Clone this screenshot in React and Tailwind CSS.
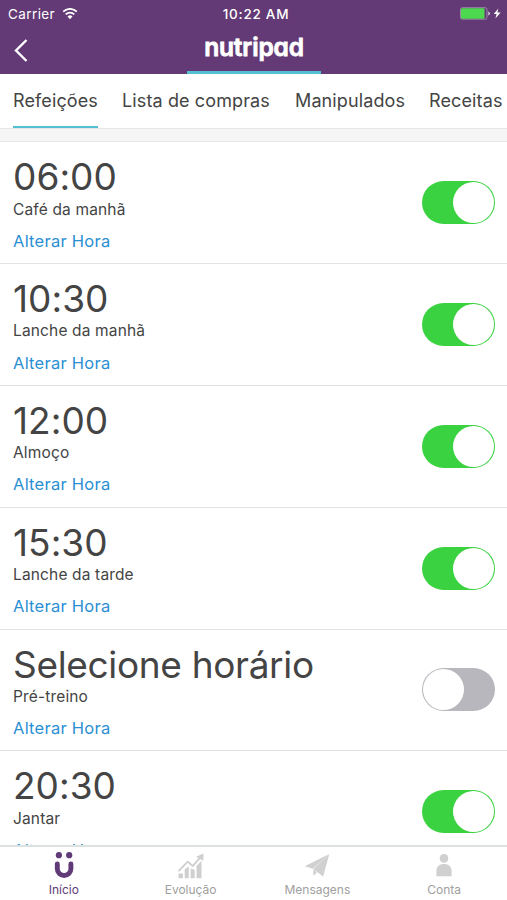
import clsx from "clsx";

const tabs = [
  { label: "Refeições", width: "w-[85px]", active: true },
  { label: "Lista de compras", width: "w-[149px]" },
  { label: "Manipulados", width: "w-[110px]" },
  { label: "Receitas", width: "w-[75px]" },
];

const meals = [
  { time: "06:00", name: "Café da manhã", enabled: true },
  { time: "10:30", name: "Lanche da manhã", enabled: true },
  { time: "12:00", name: "Almoço", enabled: true },
  { time: "15:30", name: "Lanche da tarde", enabled: true },
  { time: null, name: "Pré-treino", enabled: false },
  { time: "20:30", name: "Jantar", enabled: true },
];

const WifiIcon = () => (
  <svg className="ml-[7px] h-[13px] w-[16px]" viewBox="0 0 16 13" fill="none">
    <path d="M1.2 3.7a9.6 9.6 0 0 1 13.6 0" stroke="white" strokeWidth="1.8" />
    <path d="M3.7 6.4a6.1 6.1 0 0 1 8.6 0" stroke="white" strokeWidth="1.7" />
    <path d="M8 11.2 5.5 8.6a3.5 3.5 0 0 1 5 0z" fill="white" />
  </svg>
);

const BatteryIcon = () => (
  <svg className="h-[14px] w-[43px]" viewBox="0 0 43 14">
    <rect x="0.5" y="0.7" width="26.5" height="11.5" rx="1.8" fill="none" stroke="#9d86a8" />
    <rect x="1" y="1.2" width="23.5" height="10.5" rx="1.2" fill="#4cd94f" />
    <path d="M28.3 4.4a2.2 2.2 0 0 1 0 4.2z" fill="#e5dce9" />
    <path d="M38.3 1.5 33.8 7.1h2.8l-1.2 4.3 5.2-5.8h-3.2z" fill="white" />
  </svg>
);

const HomeIcon = () => (
  <svg className="h-[30px] w-[30px]" viewBox="0 0 30 30">
    <circle cx="9.9" cy="4.2" r="3.1" fill="#613a78" />
    <circle cx="20.2" cy="4.2" r="3.1" fill="#613a78" />
    <path
      d="M8.3 13v4.7a6.8 6.8 0 0 0 13.6 0V13"
      fill="none"
      stroke="#613a78"
      strokeWidth="4.9"
      strokeLinecap="round"
    />
  </svg>
);

const ChartIcon = () => (
  <svg className="h-[30px] w-[30px]" viewBox="0 0 30 30" fill="#cfcfcf">
    <path d="M2.5 22.5h4.4v4.8H2.5zM8.7 18.3l4.1-2.7v11.7H8.7zM14.6 17.5l4.1 1.2v8.6h-4.1zM20.5 15l5-5.3v17.6h-5z" />
    <path d="m2.5 20.2 9.2-9.5 5.2 4.2 7.8-9" fill="none" stroke="#cfcfcf" strokeWidth="1.8" />
    <path d="M27.6 2.4 27.2 9.7l-7.2-4z" />
  </svg>
);

const PlaneIcon = () => (
  <svg className="h-[30px] w-[30px]" viewBox="0 0 30 30" fill="#d0d0d0">
    <path d="M27.3 3 2.7 15.2l8.2 2.6z" />
    <path d="M27.3 3 11.3 18l9.8 7.5z" />
    <path d="M11.3 18v6.7l3.5-3.2z" />
  </svg>
);

const PersonIcon = () => (
  <svg className="h-[30px] w-[30px]" viewBox="0 0 30 30" fill="#d0d0d0">
    <circle cx="15" cy="7.4" r="4.3" />
    <path d="M7.4 25.3v-5c0-4.7 3.2-7.2 7.6-7.2s7.6 2.5 7.6 7.2v5z" />
  </svg>
);

const navItems = [
  { label: "Início", icon: HomeIcon, active: true },
  { label: "Evolução", icon: ChartIcon },
  { label: "Mensagens", icon: PlaneIcon },
  { label: "Conta", icon: PersonIcon },
];

const Header = () => (
  <header className="h-[74px] shrink-0 bg-[#633a75] text-white">
    <div className="grid h-[28px] grid-cols-3 items-center px-[8px] text-[13.5px] leading-[28px]">
      <div className="flex items-center tracking-[0.4px]">
        Carrier
        <WifiIcon />
      </div>
      <div className="pl-[5px] text-center font-medium tracking-[0.75px]">10:22 AM</div>
      <div className="-mr-[4px] flex justify-end">
        <BatteryIcon />
      </div>
    </div>
    <div className="grid h-[46px] grid-cols-[187px_134px_1fr]">
      <button type="button" aria-label="Voltar" className="flex items-start pl-[13px] pt-[10px]">
        <svg className="h-[25px] w-[17px]" viewBox="0 0 17 25" fill="none">
          <path d="M13.5 2 3 12.5 13.5 23" stroke="white" strokeWidth="2.4" />
        </svg>
      </button>
      <div className="border-b-[3px] border-[#54bfd3] text-center text-[24.5px] font-semibold leading-[38px] tracking-[-0.15px] [-webkit-text-stroke:0.8px_white] [font-feature-settings:'cv11']">
        nutripad
      </div>
    </div>
  </header>
);

const Tabs = () => (
  <nav className="flex h-[54px] shrink-0 gap-[24px] overflow-hidden pl-[13px] text-[18px] leading-[54px] tracking-[0.12px]">
    {tabs.map((tab) => (
      <div
        key={tab.label}
        className={clsx(
          "shrink-0 whitespace-nowrap",
          tab.width,
          tab.active && "border-b-2 border-[#54bfd3]"
        )}
      >
        {tab.label}
      </div>
    ))}
  </nav>
);

const Toggle = ({ enabled }) => (
  <button
    type="button"
    role="switch"
    aria-checked={enabled}
    className={clsx(
      "flex h-[43px] w-[73px] items-center rounded-full px-px",
      enabled ? "justify-end bg-[#3bd242]" : "justify-start bg-[#b8b7bd]"
    )}
  >
    <span className="size-[41px] rounded-full bg-white" />
  </button>
);

const MealRow = ({ meal }) => (
  <li className="flex h-[121.8px] shrink-0 items-center justify-between border-b border-[#e3e3e3] pl-[13px] pr-[12px]">
    <div className="flex h-full flex-col items-start pt-[17px]">
      <h2
        className={clsx(
          "text-[37px] leading-[36px]",
          meal.time ? "tracking-[0.05px]" : "tracking-[-0.33px]"
        )}
      >
        {meal.time || "Selecione horário"}
      </h2>
      <p className="mt-[4.3px] text-[15.5px] leading-[20px] tracking-[0.15px]">{meal.name}</p>
      <button type="button" className="mt-[11.2px] text-[16.5px] leading-[20px] tracking-[0.25px] text-[#2b8fd3]">
        Alterar Hora
      </button>
    </div>
    <Toggle enabled={meal.enabled} />
  </li>
);

const BottomNav = () => (
  <footer className="grid h-[55px] shrink-0 grid-cols-4 border-t-2 border-[#dde1e0] bg-white">
    {navItems.map(({ label, icon: Icon, active }) => (
      <div
        key={label}
        className={clsx(
          "flex flex-col items-center pl-[1px] pt-[4px] text-[12px] leading-[14px]",
          active ? "text-[#613a78]" : "text-[#a0a0a0]"
        )}
      >
        <Icon />
        <span className="mt-[2px]">{label}</span>
      </div>
    ))}
  </footer>
);

export default function App() {
  return (
    <div className="flex h-[900px] w-[507px] flex-col overflow-hidden bg-white font-['Inter','Liberation_Sans',sans-serif] text-[#444444]">
      <Header />
      <Tabs />
      <div className="h-[14.4px] shrink-0 border-y border-[#e8e8e8] bg-[#f5f5f5]" />
      <ul className="flex min-h-0 flex-1 flex-col overflow-hidden">
        {meals.map((meal) => (
          <MealRow key={meal.name} meal={meal} />
        ))}
      </ul>
      <BottomNav />
    </div>
  );
}
